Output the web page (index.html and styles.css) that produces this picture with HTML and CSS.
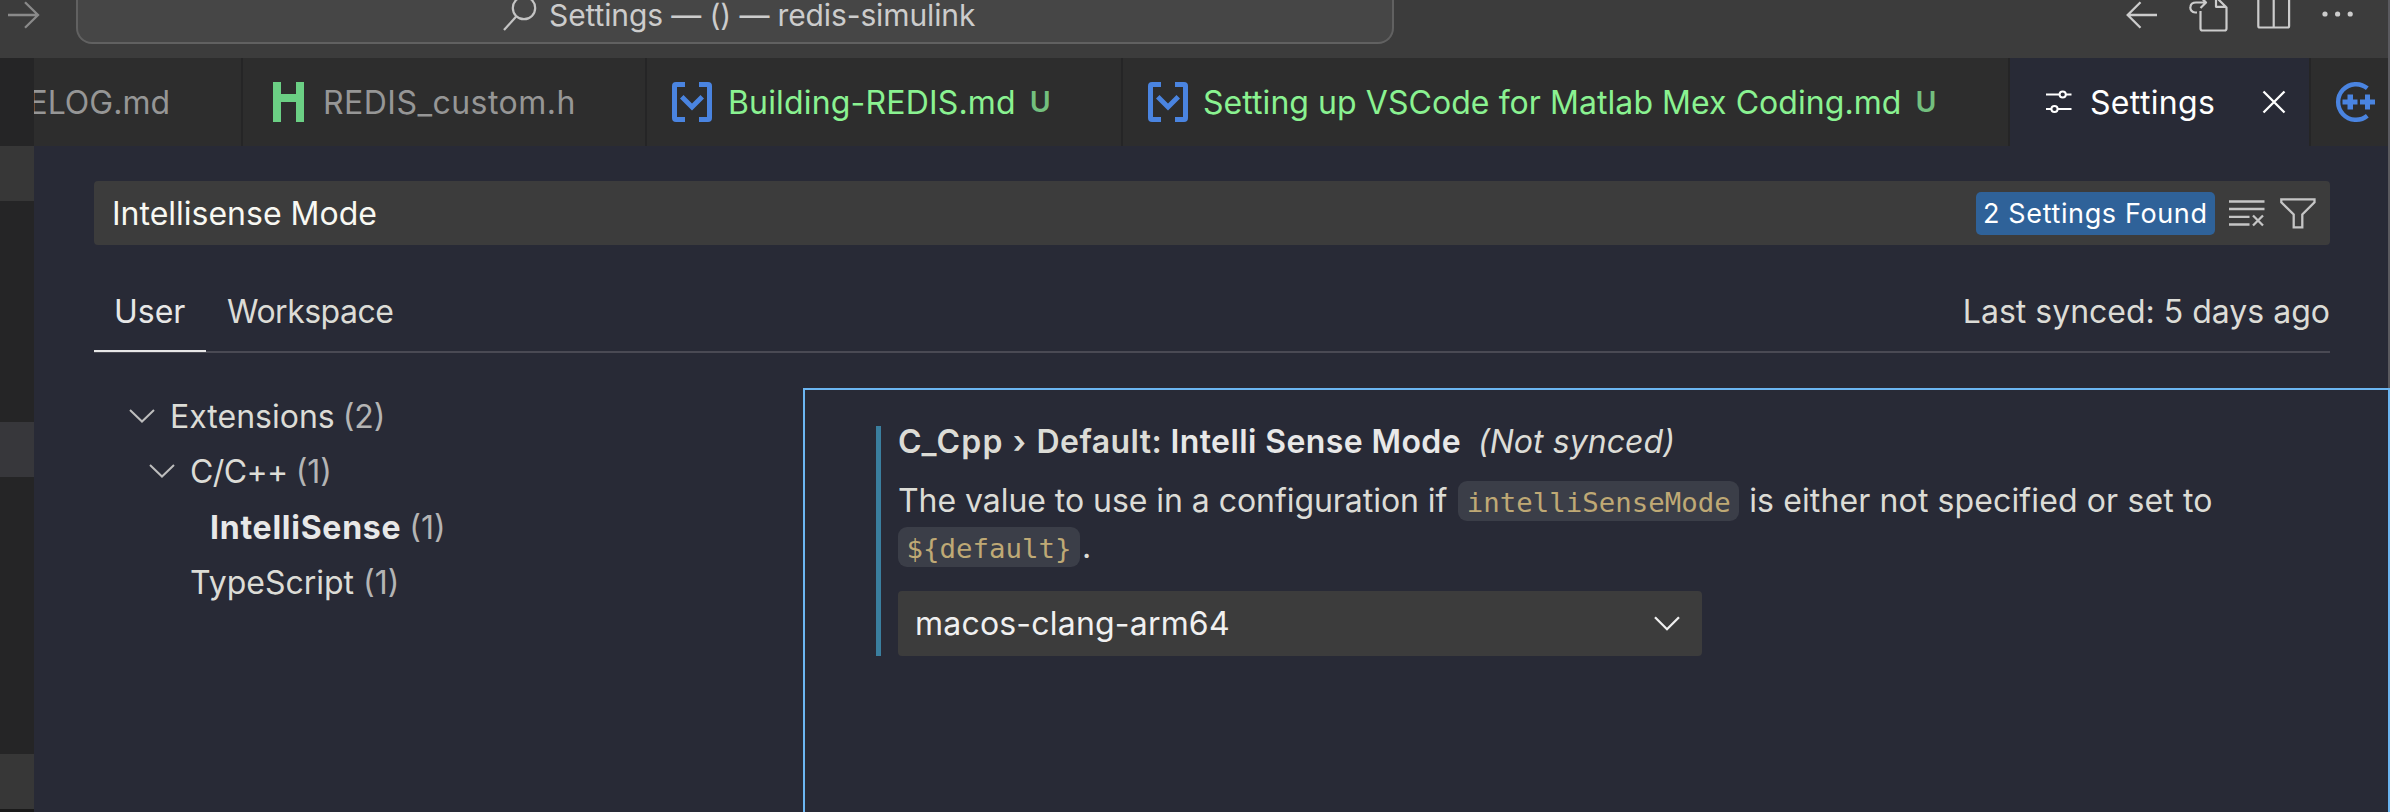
FILE: index.html
```html
<!DOCTYPE html>
<html lang="en">
<head>
<meta charset="utf-8">
<title>Settings — redis-simulink</title>
<link rel="stylesheet" href="styles.css">
</head>
<body>
<div class="window">
  <header class="titlebar">
    <svg class="nav-forward" width="32" height="28" viewBox="0 0 32 28" fill="none" stroke="#8a8a8a" stroke-width="2.3"><path d="M0 14H30M17 1.2 30 14 17 26.8"/></svg>
    <div class="command-center">
      <svg width="34" height="38" viewBox="0 0 34 38" fill="none" stroke="#c4c4c4" stroke-width="2.2"><circle cx="21" cy="15" r="11.2"/><path d="M13.2 23.5 1 37"/></svg>
      <span class="command-text">Settings — () — redis-simulink</span>
    </div>
    <div class="title-actions">
      <svg width="32" height="28" viewBox="0 0 32 28" fill="none" stroke="#cccccc" stroke-width="2.3"><path d="M31 14H2M14.5 1.2 1.7 14 14.5 26.8"/></svg>
      <svg class="act-file" width="40" height="44" viewBox="0 0 40 44" fill="none" stroke="#cccccc" stroke-width="2.2" stroke-linejoin="round"><path d="M11.5 23V40.500Q11.500 42.500 13.500 42.500H35.500Q37.500 42.500 37.500 40.500V19.500L27 9V18.800H37.500"/><path d="M8 24.500H6.500A4.800 4.800 0 0 1 1.500 18.500Q2 14.500 7 14.500H16.500M11.500 9 17 14.500 11.500 20"/></svg>
      <svg class="act-split" width="34" height="34" viewBox="0 0 34 34" fill="none" stroke="#cccccc" stroke-width="2.2"><rect x="1.300" y="1.300" width="30.800" height="31.200" rx="1.500"/><path d="M16.700 1V32"/></svg>
      <svg class="act-more" width="32" height="8" viewBox="0 0 32 8" fill="#cccccc"><circle cx="3" cy="4" r="2.600"/><circle cx="15.600" cy="4" r="2.600"/><circle cx="28.200" cy="4" r="2.600"/></svg>
    </div>
  </header>

  <div class="workbench">
    <aside class="sidebar">
      <div class="strip strip-a"></div>
      <div class="strip strip-b"></div>
      <div class="strip strip-c"></div>
      <div class="strip-end"></div>
    </aside>

    <main class="editor">
      <nav class="tabs">
        <div class="tab tab-changelog"><span>CHANGELOG.md</span></div>
        <div class="tab tab-header">
          <svg width="31" height="40" viewBox="0 0 31 40" fill="#6bcf84"><path d="M0 0H8V12H23V0H31V40H23V20H8V40H0Z"/></svg>
          <span class="label-header">REDIS_custom.h</span>
        </div>
        <div class="tab tab-building">
          <svg width="40" height="40" viewBox="0 0 40 40" fill="#4a84e0"><path d="M13 0H4Q0 0 0 4V36Q0 40 4 40H13V35H5V5H13ZM27 0H36Q40 0 40 4V36Q40 40 36 40H27V35H35V5H27ZM8 16.500 11.500 13 20 21.500 28.500 13 32 16.500 20 28.500Z"/></svg>
          <span class="label-building untracked">Building-REDIS.md</span><span class="git">U</span>
        </div>
        <div class="tab tab-setup">
          <svg width="40" height="40" viewBox="0 0 40 40" fill="#4a84e0"><path d="M13 0H4Q0 0 0 4V36Q0 40 4 40H13V35H5V5H13ZM27 0H36Q40 0 40 4V36Q40 40 36 40H27V35H35V5H27ZM8 16.500 11.500 13 20 21.500 28.500 13 32 16.500 20 28.500Z"/></svg>
          <span class="label-setup untracked">Setting up VSCode for Matlab Mex Coding.md</span><span class="git">U</span>
        </div>
        <div class="tab tab-settings">
          <svg width="26" height="26" viewBox="0 0 26 26" fill="none" stroke="#ffffff" stroke-width="2"><path d="M0 5.500H13M20 5.500H25.500M0 20H5M12 20H25.500"/><circle cx="16.700" cy="5.500" r="3.100"/><circle cx="8.500" cy="20" r="3.100"/></svg>
          <span class="label-settings">Settings</span>
          <svg class="close" width="24" height="24" viewBox="0 0 24 24" stroke="#ffffff" stroke-width="2.300"><path d="M1.500 1.500 22.500 22.500M22.500 1.500 1.500 22.500"/></svg>
        </div>
        <div class="tab tab-cpp">
          <svg width="40" height="40" viewBox="0 0 40 40" fill="none"><path d="M32.300 6.300A17.800 17.800 0 1 0 32.300 33.700" stroke="#4a84e0" stroke-width="4.400"/><path d="M12.500 12.500H18V17.500H22.500V22.500H18V27.500H12.500V22.500H7.500V17.500H12.500ZM30 12.500H35V17.500H40V22.500H35V27.500H30V22.500H25V17.500H30Z" fill="#4a84e0"/></svg>
        </div>
      </nav>

      <div class="settings">
        <div class="search">
          <span class="query">Intellisense Mode</span>
          <span class="badge">2 Settings Found</span>
          <svg class="clear" width="36" height="28" viewBox="0 0 36 28" fill="none" stroke="#c5c5c5" stroke-width="2.300"><path d="M0 2.500H35.500M0 10H35.500M0 17.800H20.500M0 25.500H20.500M24 16.500 34 26.500M34 16.500 24 26.500"/></svg>
          <svg class="filter" width="36" height="31" viewBox="0 0 36 31" fill="none" stroke="#c5c5c5" stroke-width="2.300"><path d="M1.300 1.300H34.500V4.300L22.300 16.500V29.300H13.700V16.500L1.300 4.300Z"/></svg>
        </div>

        <div class="scopes">
          <span class="scope scope-active">User</span>
          <span class="scope scope-workspace">Workspace</span>
          <span class="synced">Last synced: 5 days ago</span>
        </div>

        <div class="body">
          <div class="tree">
            <div class="row row-extensions">
              <svg width="26" height="14" viewBox="0 0 26 14" fill="none" stroke="#bdbdbd" stroke-width="2"><path d="M1 1 13 12.500 25 1"/></svg>
              <span>Extensions</span><span class="count">(2)</span>
            </div>
            <div class="row row-cpp">
              <svg width="26" height="14" viewBox="0 0 26 14" fill="none" stroke="#bdbdbd" stroke-width="2"><path d="M1 1 13 12.500 25 1"/></svg>
              <span class="name-cpp">C/C++</span><span class="count">(1)</span>
            </div>
            <div class="row row-intellisense"><span class="name-bold">IntelliSense</span><span class="count">(1)</span></div>
            <div class="row row-typescript"><span>TypeScript</span><span class="count">(1)</span></div>
          </div>

          <section class="panel">
            <article class="setting">
              <h1 class="setting-title"><span class="setting-group">C_Cpp › </span><span>Default: </span><span class="setting-name">Intelli Sense Mode</span><em class="note">(Not synced)</em></h1>
              <p class="description"><span class="desc-a">The value to use in a configuration if</span><code class="chip-a">intelliSenseMode</code><span class="desc-b">is either not specified or set to</span><br><code class="chip-b">${default}</code><span class="period">.</span></p>
              <div class="select">
                <span>macos-clang-arm64</span>
                <svg width="26" height="15" viewBox="0 0 26 15" fill="none" stroke="#f0f0f0" stroke-width="2.300"><path d="M1 1.200 13 13.200 25 1.200"/></svg>
              </div>
            </article>
          </section>
        </div>
      </div>
    </main>
  </div>
  <div class="window-edge"></div>
</div>
</body>
</html>
```
FILE: styles.css
```css
* { box-sizing: border-box; }
body { margin: 0; background: #282a36; }
svg { display: block; flex: none; }

.window {
  position: relative;
  width: 2390px;
  height: 812px;
  overflow: hidden;
  display: flex;
  flex-direction: column;
  background: #282a36;
  font: 400 32px/40px Inter, "Liberation Sans", sans-serif;
  color: #dcdcd6;
  white-space: nowrap;
}
.window-edge {
  position: absolute;
  top: 0;
  right: 0;
  width: 2px;
  height: 388px;
  background: #5a5a5f;
}

/* Title bar */
.titlebar {
  flex: none;
  height: 58px;
  display: flex;
  align-items: flex-start;
  background: #3c3c3c;
}
.nav-forward { margin: 1px 36px 0 8px; }
.command-center {
  width: 1318px;
  height: 44px;
  display: flex;
  align-items: flex-start;
  padding-left: 425px;
  border: 2px solid #616161;
  border-top: 0;
  border-radius: 0 0 16px 16px;
  background: #464646;
}
.command-center svg { margin-top: -7px; }
.command-text {
  margin: -5px 0 0 12px;
  font-size: 30px;
  letter-spacing: -0.12px;
  color: #cccccc;
}
.title-actions {
  display: flex;
  align-items: flex-start;
  margin-left: 732px;
}
.title-actions svg { margin-top: 1px; }
.title-actions .act-file { margin: -12px 0 0 31px; }
.title-actions .act-split { margin: -5px 0 0 28px; }
.title-actions .act-more { margin: 10px 0 0 31px; }

/* Side strip */
.workbench { flex: 1; display: flex; min-height: 0; }
.sidebar { flex: none; width: 34px; background: #252526; }
.strip { height: 55px; background: #373737; }
.strip-a { margin-top: 88px; }
.strip-b { margin-top: 221px; background: #37373b; }
.strip-c { margin-top: 277px; }
.strip-end { height: 3px; background: #1a1a1a; }

/* Tabs */
.editor { flex: 1; min-width: 0; display: flex; flex-direction: column; }
.tabs { flex: none; height: 88px; display: flex; background: #2d2d2d; }
.tab {
  flex: none;
  display: flex;
  align-items: center;
  border-right: 2px solid #252526;
  color: #969696;
}
.tab > span { padding-top: 2px; }
.tab-changelog { width: 209px; justify-content: flex-end; padding-right: 71px; overflow: hidden; }
.tab-header { width: 404px; padding-left: 30px; }
.label-header { margin-left: 19px; letter-spacing: 0.47px; }
.tab-building { width: 476px; padding-left: 25px; }
.label-building { margin-left: 16px; letter-spacing: 0.17px; }
.tab-setup { width: 887px; padding-left: 25px; }
.label-setup { margin-left: 15px; letter-spacing: 0.06px; }
.untracked { color: #8af291; }
.tab > .git { margin: -2px 0 0 14px; font-size: 28.5px; font-weight: 600; color: #73bf7e; }
.tab-settings { width: 301px; padding-left: 36px; background: #282a36; color: #ffffff; }
.label-settings { margin-left: 18px; letter-spacing: 0.34px; }
.close { margin-left: 47px; }
.tab-cpp { flex: 1; padding-left: 24px; border-right: 0; }

/* Search */
.settings { flex: 1; min-height: 0; display: flex; flex-direction: column; padding-top: 35px; }
.search {
  flex: none;
  width: 2236px;
  height: 64px;
  margin-left: 60px;
  display: flex;
  align-items: center;
  padding: 0 14px 0 18px;
  border-radius: 4px;
  background: #3c3c3c;
}
.query { flex: 1; padding-top: 2px; color: #f8f8f2; }
.badge {
  width: 239px;
  height: 43px;
  padding-left: 7px;
  border-radius: 5px;
  background: #2f6299;
  color: #ffffff;
  font-size: 27px;
  line-height: 44px;
  letter-spacing: 0.63px;
}
.clear { margin-left: 14px; }
.filter { margin-left: 15px; }

/* Scope tabs */
.scopes {
  flex: none;
  width: 2236px;
  height: 108px;
  margin: 0 0 0 60px;
  display: flex;
  align-items: stretch;
  line-height: 134px;
  border-bottom: 2px solid #4a4a54;
}
.scope-active {
  height: 107px;
  padding-left: 20px;
  width: 112px;
  border-bottom: 2px solid #e7e7e7;
  color: #e7e7e7;
}
.scope-workspace { margin-left: 21px; letter-spacing: -0.5px; }
.synced { margin-left: auto; }

/* Contents */
.body { flex: 1; display: flex; margin-top: 35px; min-height: 0; }
.tree { flex: none; width: 769px; }
.row { height: 55.5px; display: flex; align-items: center; }
.row > span { padding-top: 2px; }
.row-extensions { padding-left: 95px; }
.row-cpp { padding-left: 115px; }
.row svg { margin-right: 15px; }
.name-cpp { letter-spacing: -0.6px; }
.row-intellisense { padding-left: 176px; }
.name-bold { font-weight: 700; letter-spacing: 0.75px; color: #e8e8e8; }
.row-typescript { padding-left: 156px; }
.count { margin-left: 8px; color: #b4b4b4; }
.row-typescript .count { margin-left: 9px; }

.panel {
  flex: 1;
  padding: 36px 0 0 71px;
  border: 2px solid #6cb6f2;
  border-bottom: 0;
}
.setting {
  height: 230px;
  padding-left: 17px;
  border-left: 5px solid #3a7e9e;
}
.setting-title {
  margin: 0;
  font-size: 32px;
  line-height: 32px;
  font-weight: 600;
  letter-spacing: 0.4px;
}
.setting-title > span { white-space: pre; }
.setting-group { letter-spacing: 1.2px; }
.setting-name { color: #e8e8e8; }
.note { margin-left: 17px; font-weight: 400; letter-spacing: 0.05px; }
.description { margin: 20px 0 0; line-height: 46px; }
.desc-a { letter-spacing: -0.05px; }
.desc-b { margin-left: 10px; letter-spacing: 0.12px; }
code {
  padding: 5.7px 8.5px 2.6px;
  border-radius: 9px;
  background: #3b3e48;
  color: #bfa975;
  font: 27.4px/1 "DejaVu Sans Mono", monospace;
}
.chip-a { margin-left: 11px; }
.period { margin-left: 2px; }
.select {
  width: 804px;
  height: 65px;
  display: flex;
  align-items: center;
  justify-content: space-between;
  margin-top: 21px;
  padding: 0 22px 0 17px;
  border-radius: 4px;
  background: #3c3c3c;
  color: #f0f0f0;
  letter-spacing: 0.2px;
}
.select span { padding-top: 1px; }
```
